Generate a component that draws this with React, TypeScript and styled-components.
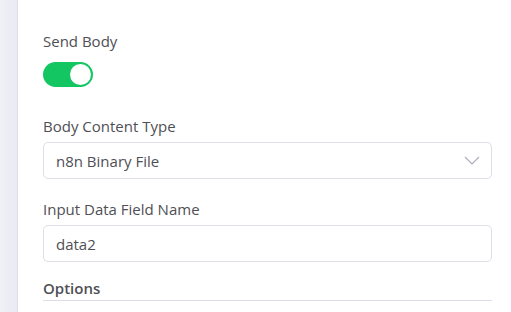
import { useState } from 'react'
import styled, { createGlobalStyle } from 'styled-components'

const GlobalStyle = createGlobalStyle`
  html, body {
    margin: 0;
    padding: 0;
    background: #ffffff;
  }
  body {
    font-family: 'Open Sans', 'Liberation Sans', sans-serif;
    color: #555555;
  }
`

const Page = styled.div`
  display: flex;
  height: 312px;
  overflow: hidden;
`

const SideStrip = styled.div`
  width: 17px;
  flex-shrink: 0;
  background: linear-gradient(to right, #f0f1f6, #e9ebf3);
  border-right: 1px solid #dde0ea;
`

const Panel = styled.div`
  flex: 1;
  padding: 31px 19px 0 25px;
  display: flex;
  flex-direction: column;
`

const Field = styled.div<{ $gap?: number }>`
  display: flex;
  flex-direction: column;
  margin-bottom: ${({ $gap }) => $gap ?? 20}px;
`

const Label = styled.label<{ $space?: number }>`
  font-size: 15px;
  line-height: 20px;
  color: #4f4f55;
  margin-bottom: ${({ $space }) => $space ?? 6}px;
`

const Toggle = styled.button<{ $on: boolean }>`
  position: relative;
  width: 50px;
  height: 25px;
  padding: 0;
  border: none;
  border-radius: 13px;
  background: ${({ $on }) => ($on ? '#13c662' : '#c4c7d0')};
  cursor: pointer;

  &::after {
    content: '';
    position: absolute;
    top: 2px;
    left: ${({ $on }) => ($on ? '27px' : '2px')};
    width: 21px;
    height: 21px;
    border-radius: 50%;
    background: #ffffff;
  }
`

const Box = styled.div`
  height: 37px;
  box-sizing: border-box;
  border: 1px solid #dcdfe8;
  border-radius: 5px;
  display: flex;
  align-items: center;
  justify-content: space-between;
  padding: 0 11px 0 12px;
  font-size: 15px;
  color: #4f4f55;
`

const Chevron = () => (
  <svg width="16" height="9" viewBox="0 0 16 9" fill="none">
    <path d="M1 1l7 7 7-7" stroke="#a8acb7" strokeWidth="1.1" />
  </svg>
)

const SectionTitle = styled.div`
  font-size: 15px;
  font-weight: 600;
  line-height: 20px;
  color: #4f4f55;
  padding-bottom: 2px;
  border-bottom: 1px solid #dbdee8;
`

export default function App() {
  const [sendBody, setSendBody] = useState(true)

  return (
    <>
      <GlobalStyle />
      <Page>
        <SideStrip />
        <Panel>
          <Field $gap={29}>
            <Label $space={11}>Send Body</Label>
            <Toggle $on={sendBody} onClick={() => setSendBody(!sendBody)} />
          </Field>
          <Field $gap={20}>
            <Label>Body Content Type</Label>
            <Box>
              n8n Binary File
              <Chevron />
            </Box>
          </Field>
          <Field $gap={16}>
            <Label>Input Data Field Name</Label>
            <Box>data2</Box>
          </Field>
          <SectionTitle>Options</SectionTitle>
        </Panel>
      </Page>
    </>
  )
}
